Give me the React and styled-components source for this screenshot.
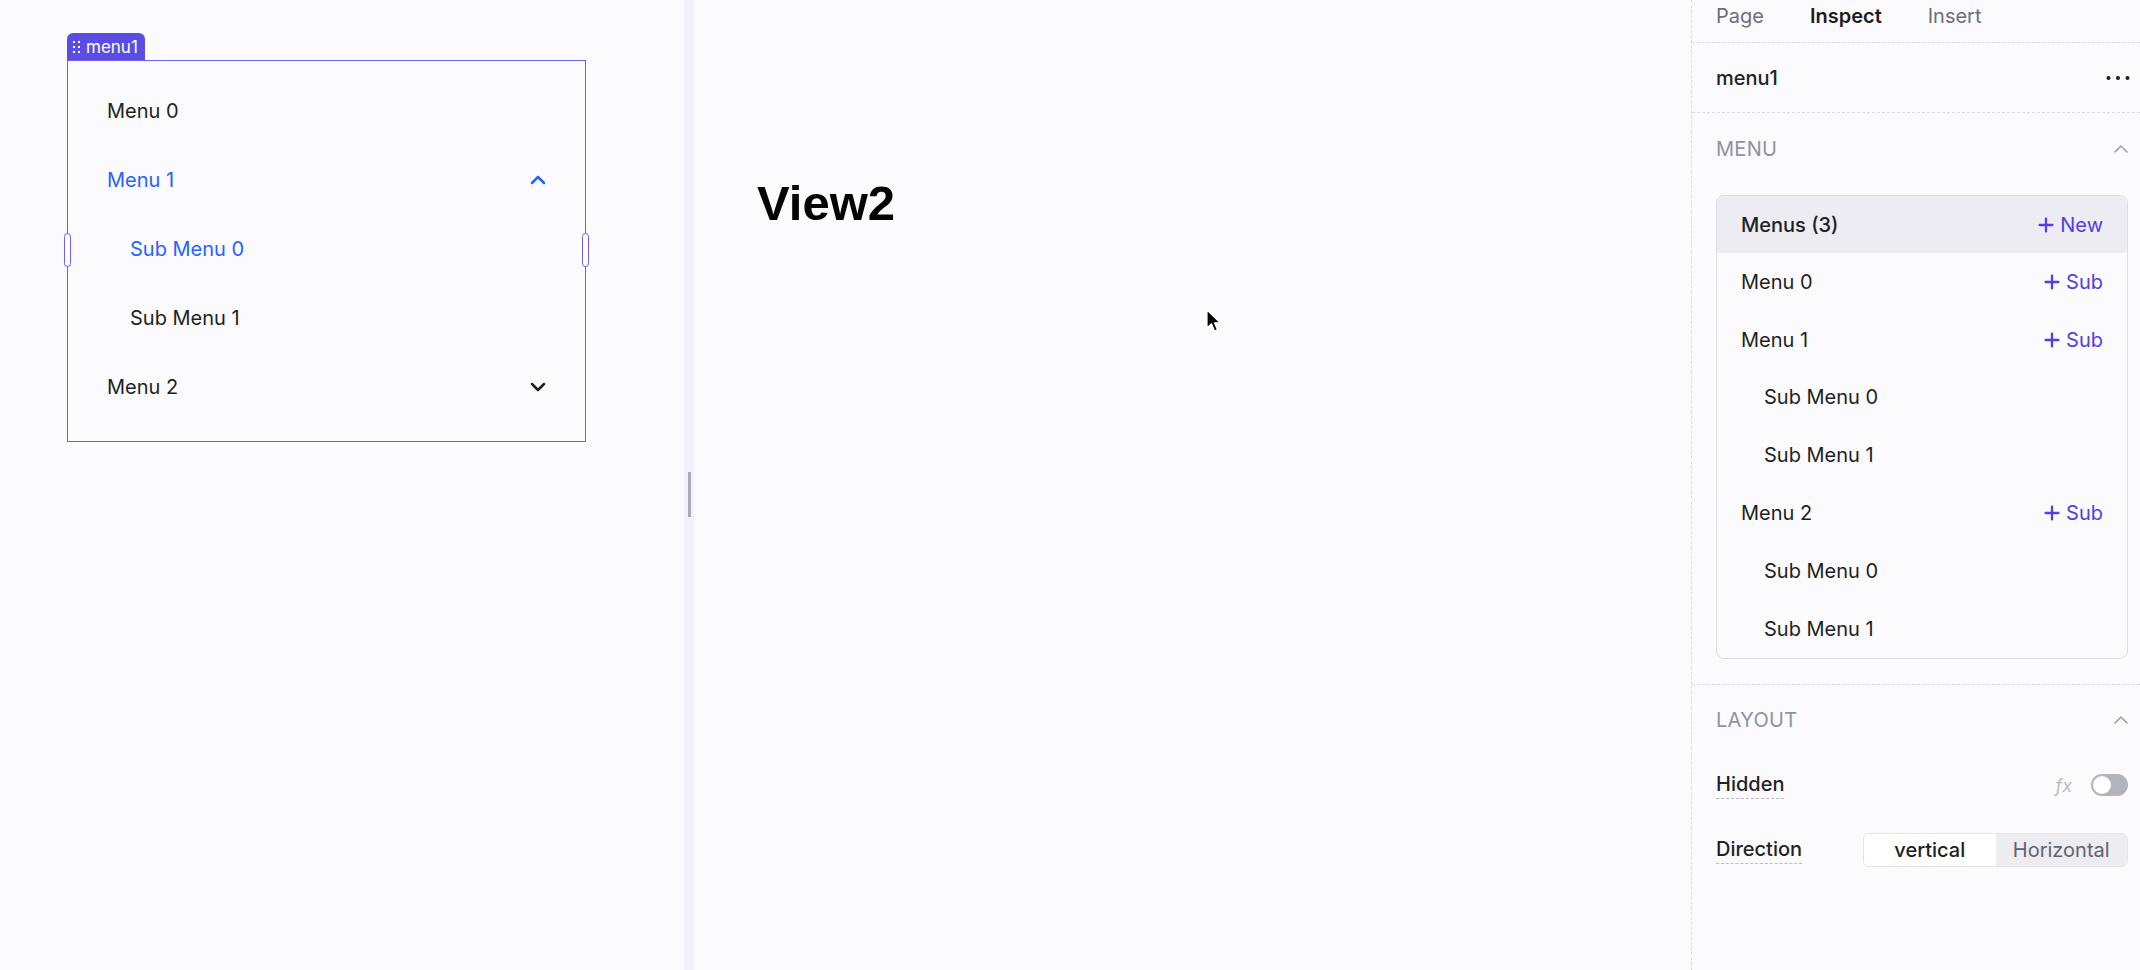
import React from "react";
import styled, { createGlobalStyle } from "styled-components";
import { ChevronDown, ChevronUp, Plus } from "lucide-react";

const GlobalStyle = createGlobalStyle`
  html, body {
    margin: 0;
    padding: 0;
    background: #fbfbfe;
  }
  body {
    font-family: Inter, "Noto Sans", sans-serif;
    color: #1d1d1f;
    -webkit-font-smoothing: antialiased;
  }
`;

const Shell = styled.div`
  display: flex;
  width: 2140px;
  height: 970px;
  overflow: hidden;
  background: #fbfbfe;
`;

/* ---------- left canvas with the selected menu widget ---------- */

const LeftCanvas = styled.section`
  width: 684px;
  flex-shrink: 0;
  box-sizing: border-box;
  padding: 33px 0 0 67px;
`;

const Widget = styled.div`
  width: 519px;
`;

const Badge = styled.div`
  display: inline-flex;
  align-items: center;
  gap: 6px;
  height: 27px;
  padding: 0 7px 0 6px;
  box-sizing: border-box;
  background: #5b4ce6;
  color: #fff;
  font-size: 17px;
  border-radius: 6px 6px 0 0;
`;

const MenuBox = styled.div`
  position: relative;
  height: 382px;
  box-sizing: border-box;
  border: 1px solid #6d5df0;
  padding: 15px 35px 0 39px;
`;

const Handle = styled.span`
  position: absolute;
  top: 172px;
  ${(p) => (p.side === "left" ? "left: -4px;" : "right: -4px;")}
  width: 7px;
  height: 34px;
  box-sizing: border-box;
  border: 1px solid #6d5df0;
  border-radius: 4px;
  background: #fff;
`;

const MenuItem = styled.div`
  display: flex;
  align-items: center;
  justify-content: space-between;
  height: 69px;
  padding-left: ${(p) => (p.sub ? "23px" : "0")};
  font-size: 20px;
  color: ${(p) => (p.active ? "#2563ff" : "#1f1f22")};
`;

/* ---------- splitter ---------- */

const Splitter = styled.div`
  width: 10px;
  flex-shrink: 0;
  display: flex;
  justify-content: center;
  padding-top: 472px;
  box-sizing: border-box;
  background: #f3f2fb;
`;

const Grip = styled.span`
  width: 3px;
  height: 45px;
  background: #a9a9ba;
`;

/* ---------- center canvas ---------- */

const CenterCanvas = styled.section`
  position: relative;
  flex: 1;
  box-sizing: border-box;
  padding: 175px 0 0 63px;
`;

const Title = styled.h1`
  margin: 0;
  font-family: "Liberation Sans", Arial, sans-serif;
  font-weight: 700;
  font-size: 49px;
  line-height: 56px;
  color: #050505;
`;

const Cursor = styled.svg`
  position: absolute;
  left: 512px;
  top: 309px;
`;

/* ---------- right inspector panel ---------- */

const Panel = styled.aside`
  width: 449px;
  flex-shrink: 0;
  box-sizing: border-box;
  border-left: 1px dashed #d9d6f0;
  display: flex;
  flex-direction: column;
`;

const Tabs = styled.nav`
  display: flex;
  gap: 46px;
  height: 43px;
  box-sizing: border-box;
  padding: 0 24px;
  border-bottom: 1px dashed #dcd9ee;
`;

const Tab = styled.span`
  font-size: 20px;
  line-height: 32px;
  font-weight: ${(p) => (p.active ? 600 : 400)};
  color: ${(p) => (p.active ? "#1d1d1f" : "#6b6f7a")};
`;

const Header = styled.div`
  display: flex;
  align-items: center;
  justify-content: space-between;
  height: 70px;
  box-sizing: border-box;
  padding: 0 10px 0 24px;
  border-bottom: 1px dashed #dcd9ee;
  font-size: 20px;
  font-weight: 500;
  color: #222226;
`;

const Section = styled.div`
  padding: 0 12px ${(p) => p.bottom || 0}px 24px;
  border-bottom: ${(p) => (p.divider ? "1px dashed #dcd9ee" : "none")};
`;

const SectionHeader = styled.div`
  display: flex;
  align-items: center;
  justify-content: space-between;
  height: 71px;
  font-size: 20px;
  color: #8e92a3;
  letter-spacing: 0.3px;

  svg {
    margin-right: -5px;
    color: #9b9eac;
  }
`;

const TreeBox = styled.div`
  margin-top: 11px;
  border: 1px solid #dedee6;
  border-radius: 8px;
  overflow: hidden;
`;

const TreeHeader = styled.div`
  display: flex;
  align-items: center;
  justify-content: space-between;
  height: 57px;
  padding: 0 24px;
  background: #ececf2;
  font-size: 20px;
  font-weight: 500;
  color: #222226;
`;

const TreeRow = styled.div`
  display: flex;
  align-items: center;
  justify-content: space-between;
  height: 57.8px;
  padding: 0 24px 0 ${(p) => (p.sub ? 47 : 24)}px;
  font-size: 20px;
  color: #1f1f22;
`;

const AddButton = styled.span`
  display: inline-flex;
  align-items: center;
  gap: 3px;
  color: #4f40e6;
  font-size: 20px;
  font-weight: 400;
`;

const PropRows = styled.div`
  margin-top: -3px;
`;

const PropRow = styled.div`
  display: flex;
  align-items: center;
  justify-content: space-between;
  height: 65px;
`;

const PropLabel = styled.span`
  font-size: 20px;
  font-weight: 500;
  line-height: 24px;
  padding-bottom: 2px;
  border-bottom: 1px dashed #b9bbc7;
  color: #222226;
`;

const Controls = styled.div`
  display: flex;
  align-items: center;
  gap: 19px;
`;

const Fx = styled.span`
  font-family: Inter, "Noto Sans", sans-serif;
  font-style: italic;
  font-size: 18px;
  color: #b9bbc6;
`;

const Toggle = styled.span`
  display: flex;
  align-items: center;
  width: 37px;
  height: 22px;
  box-sizing: border-box;
  padding: 2px;
  border-radius: 11px;
  background: #b1b3bd;

  &::after {
    content: "";
    width: 18px;
    height: 18px;
    border-radius: 50%;
    background: #fff;
  }
`;

const Segmented = styled.div`
  display: flex;
  width: 265px;
  height: 34px;
  box-sizing: border-box;
  border: 1px solid #e4e4eb;
  border-radius: 6px;
  overflow: hidden;
`;

const Segment = styled.span`
  flex: 1;
  display: flex;
  align-items: center;
  justify-content: center;
  font-size: 20px;
  font-weight: ${(p) => (p.active ? 500 : 400)};
  color: ${(p) => (p.active ? "#1d1d1f" : "#5f6370")};
  background: ${(p) => (p.active ? "#ffffff" : "#ececf1")};
`;

const DragDots = () => (
  <svg width="7" height="12" viewBox="0 0 7 12" fill="#fff">
    <rect x="0" y="0" width="2" height="2" />
    <rect x="5" y="0" width="2" height="2" />
    <rect x="0" y="5" width="2" height="2" />
    <rect x="5" y="5" width="2" height="2" />
    <rect x="0" y="10" width="2" height="2" />
    <rect x="5" y="10" width="2" height="2" />
  </svg>
);

const MoreDots = () => (
  <svg width="24" height="6" viewBox="0 0 24 6" fill="#1d1d1f">
    <circle cx="2.5" cy="3" r="2" />
    <circle cx="12" cy="3" r="2" />
    <circle cx="21.5" cy="3" r="2" />
  </svg>
);

const canvasMenu = [
  { label: "Menu 0" },
  { label: "Menu 1", active: true, icon: "up" },
  { label: "Sub Menu 0", active: true, sub: true },
  { label: "Sub Menu 1", sub: true },
  { label: "Menu 2", icon: "down" },
];

const treeRows = [
  { label: "Menu 0", add: true },
  { label: "Menu 1", add: true },
  { label: "Sub Menu 0", sub: true },
  { label: "Sub Menu 1", sub: true },
  { label: "Menu 2", add: true },
  { label: "Sub Menu 0", sub: true },
  { label: "Sub Menu 1", sub: true },
];

const App = () => (
  <>
    <GlobalStyle />
    <Shell>
      <LeftCanvas>
        <Widget>
          <Badge>
            <DragDots />
            menu1
          </Badge>
          <MenuBox>
            <Handle side="left" />
            <Handle side="right" />
            {canvasMenu.map((item, i) => (
              <MenuItem key={i} active={item.active} sub={item.sub}>
                {item.label}
                {item.icon === "up" && <ChevronUp size={24} strokeWidth={2.5} />}
                {item.icon === "down" && (
                  <ChevronDown size={24} strokeWidth={2.5} />
                )}
              </MenuItem>
            ))}
          </MenuBox>
        </Widget>
      </LeftCanvas>

      <Splitter>
        <Grip />
      </Splitter>

      <CenterCanvas>
        <Title>View2</Title>
        <Cursor width="16" height="24" viewBox="0 0 16 24">
          <path
            d="M1 1 L1 19 L5.5 14.8 L8.6 22 L11.4 20.8 L8.4 13.8 L14.2 13.8 Z"
            fill="#000"
            stroke="#fff"
            strokeWidth="1.2"
            strokeLinejoin="round"
          />
        </Cursor>
      </CenterCanvas>

      <Panel>
        <Tabs>
          <Tab>Page</Tab>
          <Tab active>Inspect</Tab>
          <Tab>Insert</Tab>
        </Tabs>
        <Header>
          menu1
          <MoreDots />
        </Header>

        <Section divider bottom={25}>
          <SectionHeader>
            MENU
            <ChevronUp size={24} strokeWidth={1.6} />
          </SectionHeader>
          <TreeBox>
            <TreeHeader>
              Menus (3)
              <AddButton>
                <Plus size={22} strokeWidth={2.5} />
                New
              </AddButton>
            </TreeHeader>
            {treeRows.map((row, i) => (
              <TreeRow key={i} sub={row.sub}>
                {row.label}
                {row.add && (
                  <AddButton>
                    <Plus size={22} strokeWidth={2.5} />
                    Sub
                  </AddButton>
                )}
              </TreeRow>
            ))}
          </TreeBox>
        </Section>

        <Section>
          <SectionHeader>
            LAYOUT
            <ChevronUp size={24} strokeWidth={1.6} />
          </SectionHeader>
          <PropRows>
            <PropRow>
              <PropLabel>Hidden</PropLabel>
              <Controls>
                <Fx>fx</Fx>
                <Toggle />
              </Controls>
            </PropRow>
            <PropRow>
              <PropLabel>Direction</PropLabel>
              <Segmented>
                <Segment active>vertical</Segment>
                <Segment>Horizontal</Segment>
              </Segmented>
            </PropRow>
          </PropRows>
        </Section>
      </Panel>
    </Shell>
  </>
);

export default App;
